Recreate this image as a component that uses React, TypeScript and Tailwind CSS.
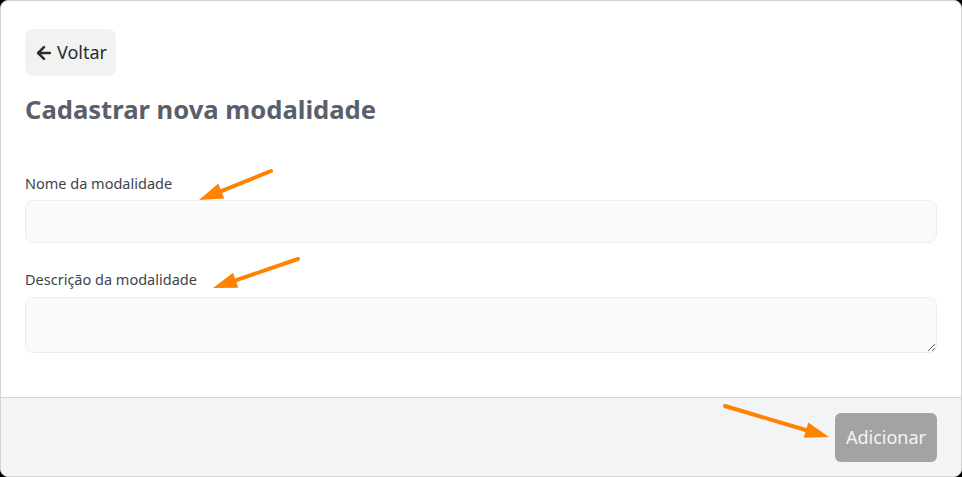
import { ArrowLeft } from 'lucide-react';

function Arrow({ x1, y1, x2, y2 }: { x1: number; y1: number; x2: number; y2: number }) {
  const dx = x2 - x1;
  const dy = y2 - y1;
  const len = Math.hypot(dx, dy);
  const ux = dx / len;
  const uy = dy / len;
  const headLen = 24;
  const half = 8;
  const bx = x2 - ux * headLen;
  const by = y2 - uy * headLen;
  const p1 = `${bx - uy * half},${by + ux * half}`;
  const p2 = `${bx + uy * half},${by - ux * half}`;
  return (
    <g>
      <line x1={x1} y1={y1} x2={bx + ux * 4} y2={by + uy * 4} stroke="#ff8200" strokeWidth={4} strokeLinecap="round" />
      <polygon points={`${x2},${y2} ${p1} ${p2}`} fill="#ff8200" />
    </g>
  );
}

export default function App() {
  return (
    <div className="relative h-screen w-full bg-black" style={{ fontFamily: '"Noto Sans", sans-serif' }}>
      <div className="flex h-full flex-col overflow-hidden rounded-lg border border-[#d4d4d4] bg-white">
        <div className="flex-1 px-6 pt-7">
          <button className="flex h-[47px] items-center gap-[3px] rounded-lg bg-[#f2f2f2] px-[9px] text-[18px] text-[#2b2b2b]">
            <ArrowLeft size={20} strokeWidth={3} />
            Voltar
          </button>
          <h1 className="mt-[16px] text-[25.6px] font-bold leading-9 text-[#59606c]">Cadastrar nova modalidade</h1>
          <form className="mt-[45px]">
            <label className="block text-[14.5px] leading-5 text-[#3d434d]">Nome da modalidade</label>
            <input
              type="text"
              className="mt-[7px] block h-[43px] w-full rounded-lg border border-[#ececec] bg-[#fafafa] px-3"
            />
            <label className="mt-[26px] block text-[14.5px] leading-5 text-[#3d434d]">Descrição da modalidade</label>
            <textarea className="mt-[8px] block h-[56px] w-full rounded-lg border border-[#ececec] bg-[#fafafa] px-3" />
          </form>
        </div>
        <div className="flex h-[79px] items-start justify-end border-t border-[#d4d4d4] bg-[#f3f4f6] px-6 pt-[15px]">
          <button className="h-[49px] rounded-md bg-[#a3a3a3] px-[11px] text-[18px] text-[#f4f4f4]">Adicionar</button>
        </div>
      </div>
      <svg className="pointer-events-none absolute inset-0" width="962" height="477">
        <Arrow x1={271} y1={171} x2={199} y2={200} />
        <Arrow x1={298} y1={259} x2={213} y2={288} />
        <Arrow x1={725} y1={406} x2={829} y2={437} />
      </svg>
    </div>
  );
}
